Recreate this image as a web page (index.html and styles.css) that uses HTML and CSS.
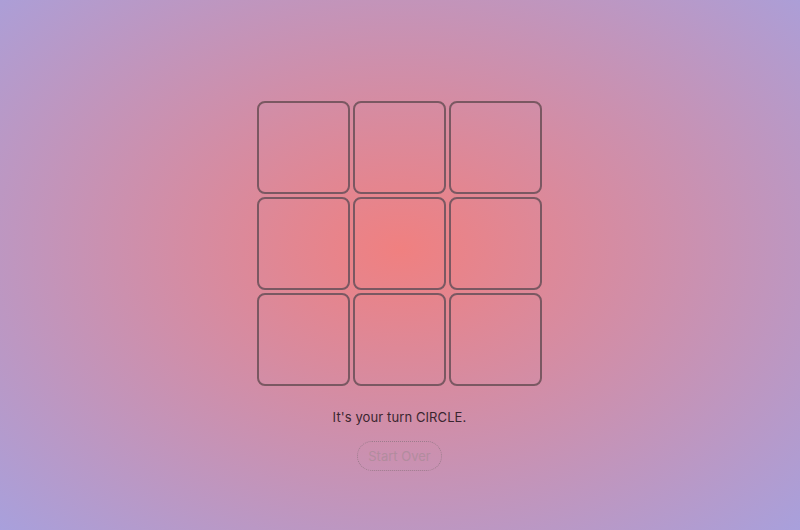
FILE: index.html
```html
<!DOCTYPE html>
<html>
<head>
<meta charset="utf-8">
<link rel="stylesheet" href="styles.css">
</head>
<body>
<main class="game">
  <div class="board">
    <div class="cell"></div><div class="cell"></div><div class="cell"></div>
    <div class="cell"></div><div class="cell"></div><div class="cell"></div>
    <div class="cell"></div><div class="cell"></div><div class="cell"></div>
  </div>
  <p class="status">It's your turn CIRCLE.</p>
  <button class="restart" disabled>Start Over</button>
</main>
</body>
</html>
```
FILE: styles.css
```css
html, body {
  margin: 0;
  height: 100%;
}
body {
  background: radial-gradient(ellipse farthest-corner at 50% 47%, #f08080 0%, #a8a0dc 100%);
  font-family: Inter, "Open Sans", sans-serif;
  color: #3a2630;
}
.game {
  display: flex;
  flex-direction: column;
  align-items: center;
  padding: 101px 1px 0 0;
}
.board {
  display: grid;
  grid-template-columns: repeat(3, 93px);
  grid-template-rows: repeat(3, 93px);
  gap: 3px;
}
.cell {
  border: 2px solid #7a5862;
  border-radius: 8px;
  box-sizing: border-box;
}
.status {
  margin: 23px 0 0;
  font-size: 13px;
  line-height: 16px;
  letter-spacing: 0.1px;
}
.restart {
  margin-top: 16px;
  width: 85px;
  height: 30px;
  border: 1px dotted #9c7c8c;
  border-radius: 15px;
  background: transparent;
  font-family: inherit;
  font-size: 13px;
  color: #b28c9e;
  padding: 0;
}
```
